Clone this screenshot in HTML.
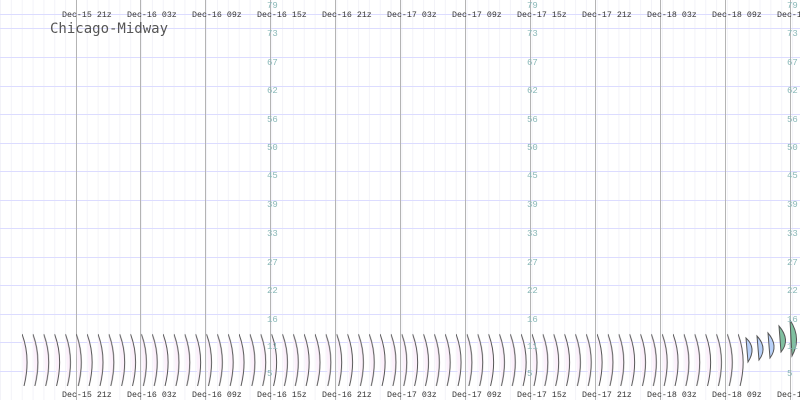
<!DOCTYPE html>
<html><head><meta charset="utf-8"><style>
html,body{margin:0;padding:0;background:#fff;width:800px;height:400px;overflow:hidden}
svg text{font-family:"Liberation Mono",monospace}
</style></head><body>
<svg width="800" height="400" xmlns="http://www.w3.org/2000/svg">
<defs>
<pattern id="vg" x="0" y="0" width="10.85" height="400" patternUnits="userSpaceOnUse">
<rect x="0" y="0" width="1" height="400" fill="#f3f3f8"/>
</pattern>
<pattern id="barb" x="22" y="0" width="10.85" height="400" patternUnits="userSpaceOnUse">
<path d="M0,334 Q9,358 2,386 Z" fill="#fcf0fb"/>
<path d="M0,334 Q9,358 2,386" fill="none" stroke="#555" stroke-width="1"/>
</pattern>
</defs>
<rect width="800" height="400" fill="url(#vg)"/>
<g stroke="#dcdcff" stroke-width="1">
<line x1="0" y1="14.5" x2="800" y2="14.5"/>
<line x1="0" y1="28.5" x2="800" y2="28.5"/>
<line x1="0" y1="57.5" x2="800" y2="57.5"/>
<line x1="0" y1="86.5" x2="800" y2="86.5"/>
<line x1="0" y1="114.5" x2="800" y2="114.5"/>
<line x1="0" y1="143.5" x2="800" y2="143.5"/>
<line x1="0" y1="171.5" x2="800" y2="171.5"/>
<line x1="0" y1="200.5" x2="800" y2="200.5"/>
<line x1="0" y1="228.5" x2="800" y2="228.5"/>
<line x1="0" y1="257.5" x2="800" y2="257.5"/>
<line x1="0" y1="285.5" x2="800" y2="285.5"/>
<line x1="0" y1="314.5" x2="800" y2="314.5"/>
<line x1="0" y1="342.5" x2="800" y2="342.5"/>
<line x1="0" y1="371.5" x2="800" y2="371.5"/>
</g>
<g stroke="#b4b4b4" stroke-width="1">
<line x1="76.5" y1="0" x2="76.5" y2="400"/>
<line x1="140.5" y1="0" x2="140.5" y2="400"/>
<line x1="205.5" y1="0" x2="205.5" y2="400"/>
<line x1="270.5" y1="0" x2="270.5" y2="400"/>
<line x1="335.5" y1="0" x2="335.5" y2="400"/>
<line x1="400.5" y1="0" x2="400.5" y2="400"/>
<line x1="465.5" y1="0" x2="465.5" y2="400"/>
<line x1="530.5" y1="0" x2="530.5" y2="400"/>
<line x1="595.5" y1="0" x2="595.5" y2="400"/>
<line x1="660.5" y1="0" x2="660.5" y2="400"/>
<line x1="725.5" y1="0" x2="725.5" y2="400"/>
<line x1="790.5" y1="0" x2="790.5" y2="400"/>
</g>
<rect x="22" y="325" width="726" height="70" fill="url(#barb)"/>
<g stroke="#555">
<path d="M746,338 Q757,348 748,362 Z" fill="#b8d0f8"/>
<path d="M757,336 Q768,348 759,360 Z" fill="#b8d0f8"/>
<path d="M768,333 Q779,346 770,358 Z" fill="#b8d0f8"/>
<path d="M779,326 Q791,340 781,352 Z" fill="#80c0a0"/>
<path d="M790,320 Q802,338 792,356 Z" fill="#80c0a0"/>
</g>
<g font-size="8.3" fill="#333">
<text x="62" y="17">Dec-15 21z</text>
<text x="127" y="17">Dec-16 03z</text>
<text x="192" y="17">Dec-16 09z</text>
<text x="257" y="17">Dec-16 15z</text>
<text x="322" y="17">Dec-16 21z</text>
<text x="387" y="17">Dec-17 03z</text>
<text x="452" y="17">Dec-17 09z</text>
<text x="517" y="17">Dec-17 15z</text>
<text x="582" y="17">Dec-17 21z</text>
<text x="647" y="17">Dec-18 03z</text>
<text x="712" y="17">Dec-18 09z</text>
<text x="777" y="17">Dec-1</text>
<text x="62" y="397">Dec-15 21z</text>
<text x="127" y="397">Dec-16 03z</text>
<text x="192" y="397">Dec-16 09z</text>
<text x="257" y="397">Dec-16 15z</text>
<text x="322" y="397">Dec-16 21z</text>
<text x="387" y="397">Dec-17 03z</text>
<text x="452" y="397">Dec-17 09z</text>
<text x="517" y="397">Dec-17 15z</text>
<text x="582" y="397">Dec-17 21z</text>
<text x="647" y="397">Dec-18 03z</text>
<text x="712" y="397">Dec-18 09z</text>
<text x="777" y="397">Dec-1</text>
</g>
<text x="50" y="33" font-size="14" fill="#555" style="font-family:'DejaVu Sans Mono',monospace">Chicago-Midway</text>
<g font-size="9" fill="#8ab8b8">
<text x="267" y="8">79</text><text x="267" y="36">73</text><text x="267" y="65">67</text><text x="267" y="93">62</text><text x="267" y="122">56</text><text x="267" y="150">50</text><text x="267" y="178">45</text><text x="267" y="207">39</text><text x="267" y="236">33</text><text x="267" y="265">27</text><text x="267" y="293">22</text><text x="267" y="322">16</text><text x="267" y="349">11</text><text x="267" y="376">5</text>
<text x="527" y="8">79</text><text x="527" y="36">73</text><text x="527" y="65">67</text><text x="527" y="93">62</text><text x="527" y="122">56</text><text x="527" y="150">50</text><text x="527" y="178">45</text><text x="527" y="207">39</text><text x="527" y="236">33</text><text x="527" y="265">27</text><text x="527" y="293">22</text><text x="527" y="322">16</text><text x="527" y="349">11</text><text x="527" y="376">5</text>
<text x="787" y="8">79</text><text x="787" y="36">73</text><text x="787" y="65">67</text><text x="787" y="93">62</text><text x="787" y="122">56</text><text x="787" y="150">50</text><text x="787" y="178">45</text><text x="787" y="207">39</text><text x="787" y="236">33</text><text x="787" y="265">27</text><text x="787" y="293">22</text><text x="787" y="322">16</text><text x="787" y="349">11</text><text x="787" y="376">5</text>
</g>
</svg>
</body></html>
